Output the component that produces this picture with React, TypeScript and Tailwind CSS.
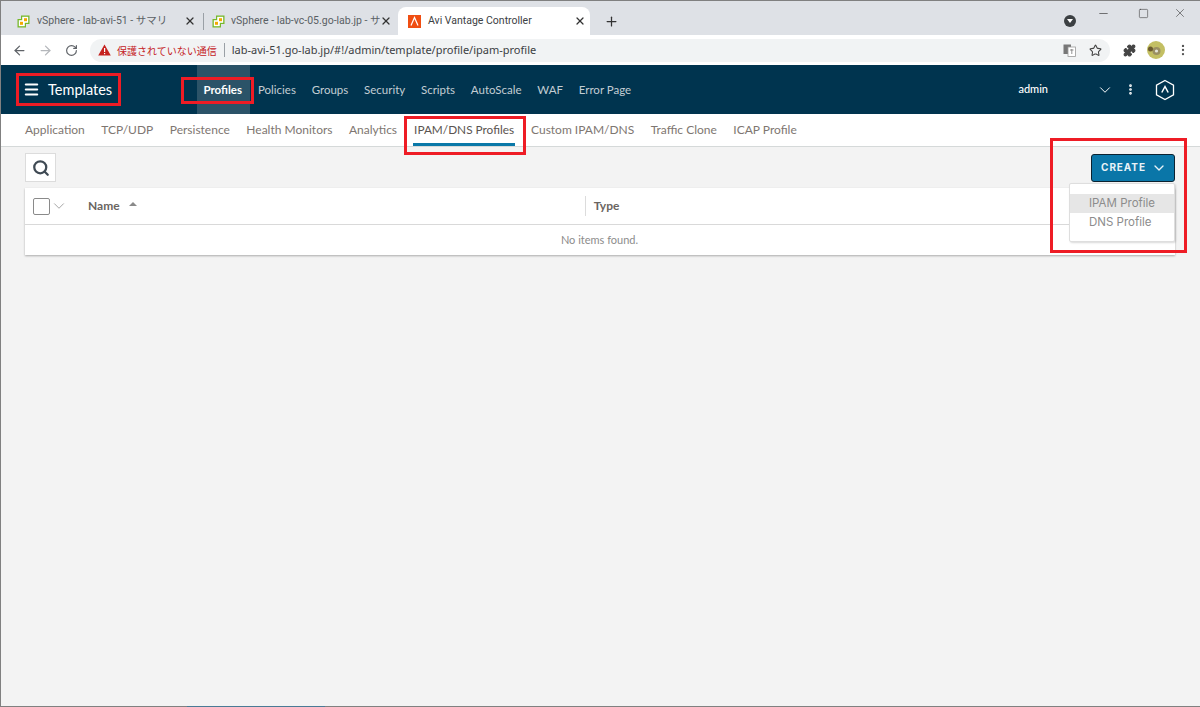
import { ArrowLeft, ArrowRight, RotateCw, Star, Puzzle, Search, ChevronDown, Plus, X, Minus, Square, Menu, EllipsisVertical } from "lucide-react";

const VSphere = () => (
  <svg width="13" height="13" viewBox="0 0 13 13" className="shrink-0">
    <path d="M4 0.5H12.5V9H9V12.5H0.5V4H4Z" fill="#76b82a" />
    <rect x="5.2" y="1.8" width="6" height="6" fill="#fff" />
    <rect x="1.8" y="5.2" width="6" height="6" fill="#fff" />
    <rect x="3" y="6.8" width="3" height="3" fill="#f2a900" />
    <rect x="7" y="3.2" width="3" height="3" fill="#f2a900" />
  </svg>
);

const sub = ["Application", "TCP/UDP", "Persistence", "Health Monitors", "Analytics"];
const sub2 = ["Custom IPAM/DNS", "Traffic Clone", "ICAP Profile"];
const nav = ["Policies", "Groups", "Security", "Scripts", "AutoScale", "WAF", "Error Page"];

export default function App() {
  return (
    <div className="relative w-[1200px] h-[707px] overflow-hidden flex flex-col bg-[#f3f3f3] border-l border-t border-[#808080] font-['Lato',sans-serif]">
      {/* tab strip */}
      <div className="h-[34px] shrink-0 bg-[#dee1e6] flex items-end pl-1 relative">
        <div className="w-[198px] shrink-0 h-[28px] flex items-center pl-3 pr-[7px] gap-[7px] text-[10.5px] text-[#5a5f64] font-['Roboto','Noto_Sans_CJK_JP',sans-serif]">
          <VSphere />
          <span className="flex-1 whitespace-nowrap">vSphere - lab-avi-51 - サマリ</span>
          <X size={12} strokeWidth={2.5} className="text-[#333]" />
        </div>
        <div className="w-px h-[17px] mb-[5px] bg-[#9aa0a6] shrink-0" />
        <div className="w-[194px] shrink-0 h-[28px] flex items-center pl-2 pr-[6px] gap-[6px] text-[10.5px] text-[#5a5f64] font-['Roboto','Noto_Sans_CJK_JP',sans-serif]">
          <VSphere />
          <span className="flex-1 min-w-0 whitespace-nowrap">vSphere - lab-vc-05.go-lab.jp - サ</span>
          <X size={12} strokeWidth={2.5} className="text-[#333]" />
        </div>
        <div className="w-[192px] shrink-0 h-[28px] bg-white rounded-t-lg flex items-center pl-[10px] pr-[4px] gap-[7px] text-[10.5px] text-[#3c4043] font-['Roboto',sans-serif]">
          <svg width="13" height="13" viewBox="0 0 13 13" className="shrink-0">
            <rect width="13" height="13" fill="#f04e12" />
            <path d="M3 10.5 6.5 2.5 10 10.5" fill="none" stroke="#fff" strokeWidth="1.2" />
          </svg>
          <span className="flex-1 whitespace-nowrap">Avi Vantage Controller</span>
          <X size={12} strokeWidth={2.5} className="text-[#333]" />
        </div>
        <Plus size={15} strokeWidth={2} className="ml-[14px] mb-[6px] text-[#333]" />
        <div className="flex-1" />
        <div className="w-3 h-3 mb-[8px] mr-[124px] rounded-full bg-[#3c4043] flex items-center justify-center">
          <div className="w-0 h-0 border-l-[3px] border-r-[3px] border-t-[4px] border-l-transparent border-r-transparent border-t-white" />
        </div>
        <div className="absolute top-[5px] right-[13px] flex items-center gap-[26px] text-[#333]">
          <Minus size={13} strokeWidth={1.2} />
          <Square size={11} strokeWidth={1.2} className="ml-[2px] -mr-[2px]" />
          <X size={14} strokeWidth={1} />
        </div>
      </div>
      {/* address bar */}
      <div className="h-[30px] shrink-0 bg-white flex items-center pl-[11px]">
        <ArrowLeft size={15} strokeWidth={2} className="text-[#5f6368] shrink-0" />
        <ArrowRight size={15} strokeWidth={2} className="ml-[11px] text-[#b4b7bb] shrink-0" />
        <RotateCw size={13} strokeWidth={2.2} className="ml-[12px] text-[#5f6368] shrink-0" />
        <div className="ml-[12px] w-[1020px] shrink-0 h-[23px] rounded-full bg-[#f1f3f4] flex items-center pl-2 pr-2">
          <svg width="13" height="12" viewBox="0 0 13 12" className="shrink-0">
            <path d="M6.5 0.5 12.8 11.5H0.2Z" fill="#c5221f" />
            <rect x="6" y="4" width="1.2" height="4" fill="#fff" />
            <rect x="6" y="9" width="1.2" height="1.2" fill="#fff" />
          </svg>
          <span className="ml-[6px] text-[10px] text-[#c5221f] font-['Noto_Sans_CJK_JP',sans-serif]">保護されていない通信</span>
          <div className="w-px h-[14px] bg-[#9aa0a6] ml-[7px] mr-[7px]" />
          <span className="text-[11px] text-[#3c4043] font-['Noto_Sans',sans-serif]">lab-avi-51.go-lab.jp/#!/admin/template/profile/ipam-profile</span>
          <div className="flex-1" />
          <svg width="13" height="13" viewBox="0 0 13 13" className="shrink-0">
            <rect x="0.5" y="0.5" width="7.5" height="9.5" fill="#777" />
            <rect x="5" y="3" width="7.5" height="9.5" fill="#fff" stroke="#999" strokeWidth="0.8" />
            <path d="M7 6H10.5M8.8 5V10" stroke="#777" strokeWidth="0.8" />
          </svg>
          <Star size={13} strokeWidth={2} className="ml-[13px] text-[#444] shrink-0" />
        </div>
        <Puzzle size={13} fill="#444" className="ml-[13px] text-[#444] shrink-0" />
        <svg width="18" height="18" viewBox="0 0 18 18" className="ml-[11px] shrink-0">
          <circle cx="9" cy="9" r="9" fill="#c3bf63" />
          <circle cx="9.5" cy="10" r="4" fill="#9a8f62" />
          <circle cx="3.5" cy="8" r="2.5" fill="#6b5a2e" />
          <circle cx="9.5" cy="10" r="1.6" fill="#e5e5d8" />
        </svg>
        <EllipsisVertical size={14} className="ml-[11px] text-[#555] shrink-0" />
      </div>
      {/* main nav */}
      <div className="h-[49px] shrink-0 bg-[#00344f] flex items-center relative">
        <Menu size={17} strokeWidth={3} className="ml-[22px] text-white shrink-0" />
        <span className="ml-[8px] w-[149px] shrink-0 text-[14.5px] text-white">Templates</span>
        <div className="w-[53px] shrink-0 h-full bg-[#2b5368] flex items-center justify-end pr-[8px] text-[11.5px] font-bold text-white">Profiles</div>
        <div className="ml-[8px] flex items-center gap-[15.75px] text-[11.5px] text-[#c3cdd3]">
          {nav.map((n) => <span key={n}>{n}</span>)}
        </div>
        <div className="flex-1" />
        <span className="text-[11px] text-white font-medium">admin</span>
        <ChevronDown size={18} strokeWidth={1.3} className="ml-[48px] text-white shrink-0" />
        <EllipsisVertical size={13} strokeWidth={3} className="ml-[10px] text-white shrink-0" />
        <svg width="20" height="22" viewBox="0 0 20 22" className="ml-[18px] mr-[25px] shrink-0">
          <path d="M10 1.5 18.5 6.2V15.8L10 20.5 1.5 15.8V6.2Z" fill="none" stroke="#fff" strokeWidth="1.3" />
          <path d="M6.8 13.5 10 7.5 13.2 13.5" fill="none" stroke="#fff" strokeWidth="1.5" />
        </svg>
      </div>
      {/* sub nav */}
      <div className="h-[33px] shrink-0 bg-white border-b border-[#d5d9d9] flex items-start pl-[24px] text-[12px] text-[#7e7671]">
        <div className="flex gap-[16.5px] h-full items-center">
          {sub.map((s) => <span key={s}>{s}</span>)}
        </div>
        <div className="ml-[16px] px-px h-[32px] flex items-center border-b-[3px] pt-[2px] border-[#0a78a8] text-[11.8px] text-[#5a5450]">IPAM/DNS Profiles</div>
        <div className="ml-[16px] flex gap-[16.5px] h-full items-center">
          {sub2.map((s) => <span key={s}>{s}</span>)}
        </div>
      </div>
      {/* toolbar */}
      <div className="flex items-center justify-between pl-[24px] pr-[25px] pt-[6px] shrink-0">
        <div className="w-[31px] h-[29px] bg-white border border-[#dcdcdc] flex items-center justify-center">
          <Search size={18} strokeWidth={3} className="text-[#3f4a54]" />
        </div>
        <div className="w-[84px] h-[28px] bg-[#0a76a8] border border-[#0b2230] rounded-[3px] flex items-center justify-center gap-[5px] pl-[2px] text-[10px] font-bold tracking-[0.09em] text-[#e8f2f7] font-['Inter',sans-serif]">
          CREATE <ChevronDown size={16} strokeWidth={2} />
        </div>
      </div>
      {/* table */}
      <div className="ml-[24px] mr-[25px] mt-[6px] bg-white shadow-[0_1px_2px_rgba(0,0,0,0.3)] shrink-0">
        <div className="h-[37px] border-b border-[#d9d9d9] flex items-center relative">
          <div className="ml-[8px] w-[17px] h-[17px] border border-[#8a8a8a] rounded-[2px] shrink-0" />
          <ChevronDown size={18} strokeWidth={1} className="text-[#888] shrink-0" />
          <span className="ml-[20px] text-[12px] font-bold text-[#6a6561]">Name</span>
          <div className="ml-[9px] mb-[5px] w-0 h-0 border-l-[4px] border-r-[4px] border-b-[4px] border-l-transparent border-r-transparent border-b-[#8a8a8a]" />
          <div className="ml-[448px] w-px h-[20px] bg-[#dcdcdc]" />
          <span className="ml-[8px] text-[12px] font-bold text-[#6a6561]">Type</span>
        </div>
        <div className="h-[30px] flex items-center justify-center text-[11px] text-[#8c8c8c] pr-[1px]">No items found.</div>
      </div>
      {/* dropdown */}
      <div className="absolute left-[1068px] top-[182px] w-[106px] h-[59px] bg-white border border-[#dedede] rounded-[2px] pt-[10px] text-[11.5px] text-[#8c8c8c] font-['Inter',sans-serif] shadow-[1px_1px_2px_rgba(0,0,0,0.15)]">
        <div className="h-[19px] bg-[#e6e6e6] pl-[19px] flex items-center">IPAM Profile</div>
        <div className="h-[19px] pl-[19px] flex items-center">DNS Profile</div>
      </div>
      {/* red annotation boxes */}
      <div className="absolute left-[15px] top-[72px] w-[105px] h-[33px] border-[3px] border-[#ee1c25]" />
      <div className="absolute left-[180px] top-[76px] w-[73px] h-[27px] border-[3px] border-[#ee1c25]" />
      <div className="absolute left-[403px] top-[115px] w-[122px] h-[39px] border-[3px] border-[#ee1c25]" />
      <div className="absolute left-[1049px] top-[137px] w-[137px] h-[115px] border-[3px] border-[#ee1c25]" />
      {/* window bottom edge, with a sliver of the taskbar behind it */}
      <div className="absolute left-0 right-0 bottom-0 h-px bg-[#808080]" />
      <div className="absolute left-[186px] bottom-0 w-[138px] h-px bg-[#4a7a95]" />
    </div>
  );
}
